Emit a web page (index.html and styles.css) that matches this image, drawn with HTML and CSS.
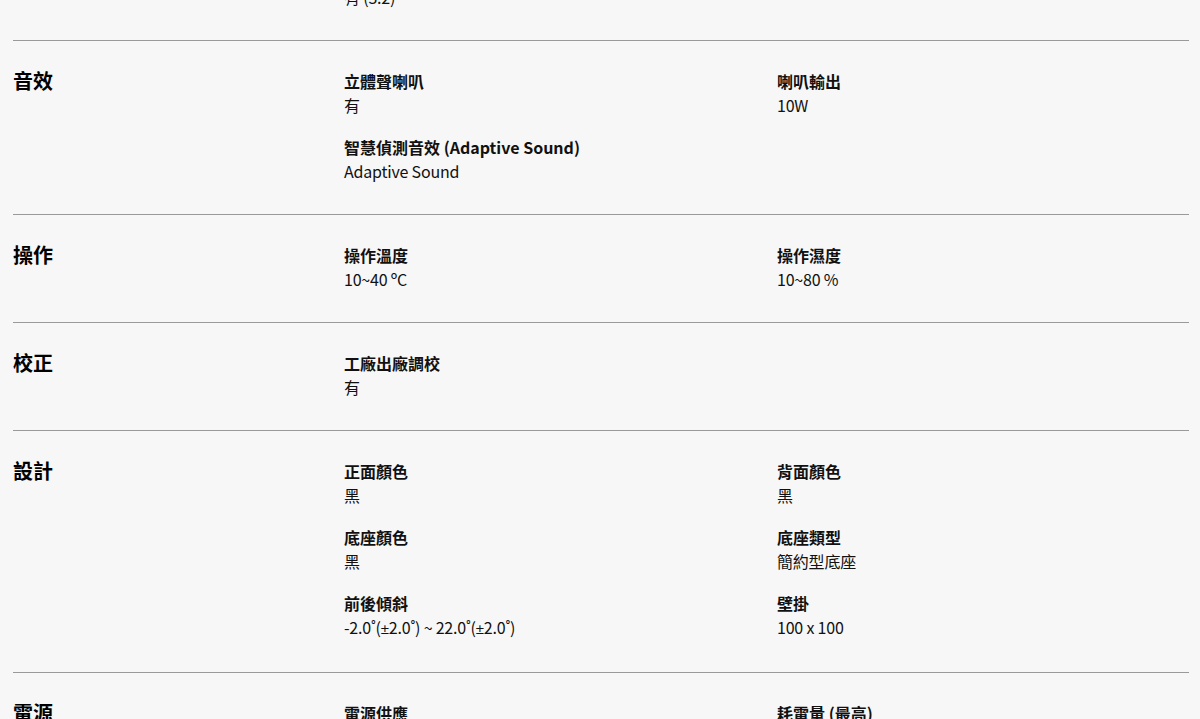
FILE: index.html
```html
<!DOCTYPE html>
<html lang="zh-Hant">
<head>
<meta charset="utf-8">
<title>規格</title>
<link rel="stylesheet" href="styles.css">
</head>
<body>
<div class="specs">
  <section class="spec-section spec-section--prev">
    <h3 class="spec-title">連接</h3>
    <div class="spec-items">
      <div class="spec-item"><div class="spec-label">USB</div><div class="spec-value">有 (3.2)</div></div>
    </div>
  </section>
  <section class="spec-section">
    <h3 class="spec-title">音效</h3>
    <div class="spec-items">
      <div class="spec-item"><div class="spec-label">立體聲喇叭</div><div class="spec-value">有</div></div>
      <div class="spec-item"><div class="spec-label">喇叭輸出</div><div class="spec-value">10W</div></div>
      <div class="spec-item"><div class="spec-label">智慧偵測音效 (Adaptive Sound)</div><div class="spec-value">Adaptive Sound</div></div>
    </div>
  </section>
  <section class="spec-section">
    <h3 class="spec-title">操作</h3>
    <div class="spec-items">
      <div class="spec-item"><div class="spec-label">操作溫度</div><div class="spec-value">10~40 ºC</div></div>
      <div class="spec-item"><div class="spec-label">操作濕度</div><div class="spec-value">10~80 %</div></div>
    </div>
  </section>
  <section class="spec-section">
    <h3 class="spec-title">校正</h3>
    <div class="spec-items">
      <div class="spec-item"><div class="spec-label">工廠出廠調校</div><div class="spec-value">有</div></div>
    </div>
  </section>
  <section class="spec-section">
    <h3 class="spec-title">設計</h3>
    <div class="spec-items">
      <div class="spec-item"><div class="spec-label">正面顏色</div><div class="spec-value">黑</div></div>
      <div class="spec-item"><div class="spec-label">背面顏色</div><div class="spec-value">黑</div></div>
      <div class="spec-item"><div class="spec-label">底座顏色</div><div class="spec-value">黑</div></div>
      <div class="spec-item"><div class="spec-label">底座類型</div><div class="spec-value">簡約型底座</div></div>
      <div class="spec-item"><div class="spec-label">前後傾斜</div><div class="spec-value">-2.0˚(<span class="sym">±</span>2.0˚) ~ 22.0˚(<span class="sym">±</span>2.0˚)</div></div>
      <div class="spec-item"><div class="spec-label">壁掛</div><div class="spec-value">100 x 100</div></div>
    </div>
  </section>
  <section class="spec-section">
    <h3 class="spec-title">電源</h3>
    <div class="spec-items">
      <div class="spec-item"><div class="spec-label">電源供應</div><div class="spec-value">AC 100~240V</div></div>
      <div class="spec-item"><div class="spec-label">耗電量 (最高)</div><div class="spec-value">45 W</div></div>
    </div>
  </section>
</div>
</body>
</html>
```
FILE: styles.css
```css
html, body {
  margin: 0;
  padding: 0;
  background: #f7f7f7;
  color: #000;
  font-family: "Noto Sans CJK TC", "Noto Sans", sans-serif;
  overflow: hidden;
}

.specs {
  margin: -67px 11px 0 13px;
}

.spec-section {
  display: grid;
  grid-template-columns: 331px 1fr;
  padding: 28px 0 31px;
  border-bottom: 1px solid #9a9a9a;
}

.spec-title {
  margin: 0;
  font-size: 20px;
  font-weight: 700;
  line-height: 24px;
}

.spec-items {
  display: grid;
  grid-template-columns: 433px 1fr;
  row-gap: 18px;
}

.spec-label {
  font-size: 16px;
  font-weight: 700;
  line-height: 24px;
  color: #111;
}

.spec-value {
  font-size: 16px;
  font-weight: 400;
  line-height: 24px;
  color: #111;
  letter-spacing: -0.2px;
}

.sym {
  font-family: "Liberation Sans", sans-serif;
  font-size: 15px;
}
```
